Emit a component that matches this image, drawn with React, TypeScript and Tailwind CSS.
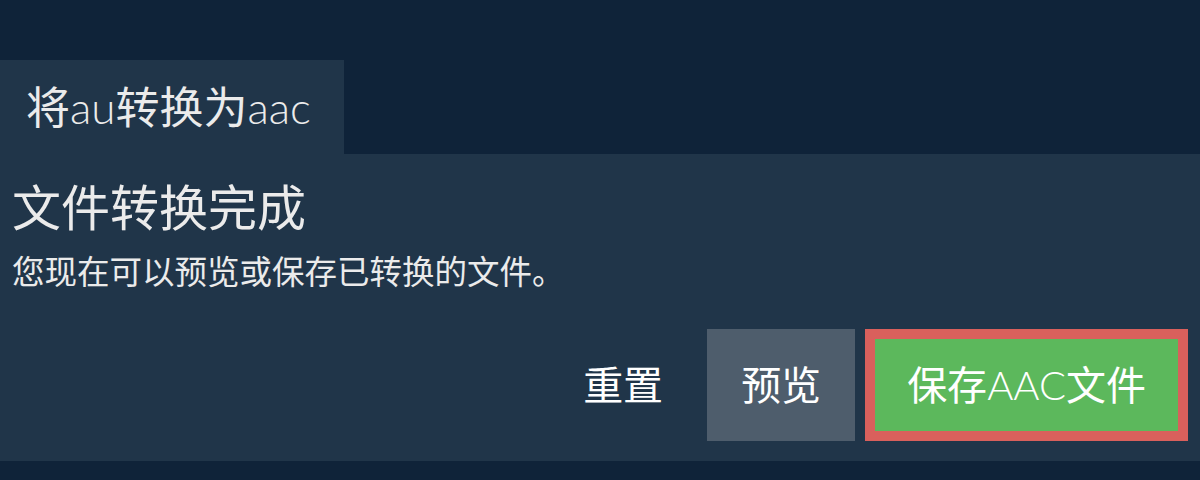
import React from "react";

export default function App() {
  return (
    <div
      className="w-[1200px] h-[480px] bg-[#0f2339] pt-[60px] text-[#ebebeb]"
      style={{ fontFamily: 'Lato, "Noto Sans CJK SC", sans-serif' }}
    >
      <div className="inline-flex h-[94px] items-center pl-[26px] pr-[33px] bg-[#203549] text-[44px] leading-none">
        将<span className="font-light">au</span>转换为<span className="font-light">aac</span>
      </div>
      <div className="bg-[#203549] h-[307px] px-3 pt-[24px]">
        <h2 className="text-[49px] leading-[58px] font-normal">文件转换完成</h2>
        <p className="mt-[12px] text-[32.5px] leading-[48px]">您现在可以预览或保存已转换的文件。</p>
        <div className="mt-[33px] flex justify-end gap-[10px]">
          <button className="h-[112px] px-[34px] text-[40px] leading-none text-white">重置</button>
          <button className="h-[112px] px-[34px] text-[40px] leading-none text-white bg-[#4e5d6c]">预览</button>
          <button className="h-[112px] px-[32px] text-[40px] leading-none text-white bg-[#5cb85c] border-[10px] border-[#d9605c]">
            保存<span className="font-light">AAC</span>文件
          </button>
        </div>
      </div>
    </div>
  );
}
